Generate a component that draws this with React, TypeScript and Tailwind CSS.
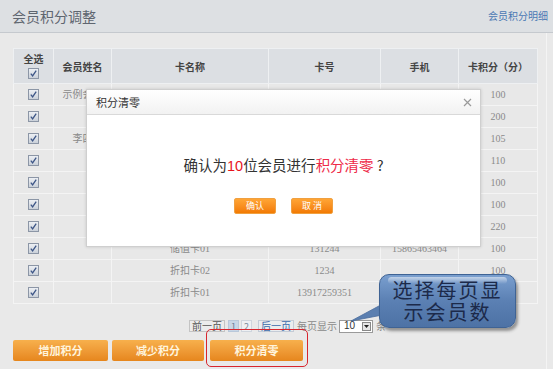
import React from "react";

const rows = [
  { name: "示例会员", card: "", no: "", phone: "", pts: "100" },
  { name: "", card: "", no: "", phone: "", pts: "200" },
  { name: "李四", card: "", no: "", phone: "", pts: "105" },
  { name: "", card: "", no: "", phone: "", pts: "110" },
  { name: "", card: "", no: "", phone: "", pts: "100" },
  { name: "", card: "", no: "", phone: "", pts: "100" },
  { name: "", card: "", no: "", phone: "", pts: "220" },
  { name: "", card: "储值卡01", no: "131244", phone: "15865463464", pts: "100" },
  { name: "", card: "折扣卡02", no: "1234", phone: "", pts: "100" },
  { name: "", card: "折扣卡01", no: "13917259351", phone: "", pts: "100" },
];

function Check() {
  return (
    <svg width="11" height="11" viewBox="0 0 11 11" className="inline-block">
      <defs>
        <linearGradient id="cb" x1="0" y1="0" x2="0" y2="1">
          <stop offset="0" stopColor="#eef1f5" />
          <stop offset="1" stopColor="#c9cfd8" />
        </linearGradient>
      </defs>
      <rect x="0.5" y="0.5" width="10" height="10" fill="url(#cb)" stroke="#8c96a6" />
      <path d="M2.8 5.6 L4.6 7.8 L8.2 2.6" fill="none" stroke="#3e5687" strokeWidth="1.3" />
    </svg>
  );
}

const cjk = { fontFamily: '"Noto Sans CJK SC", "Noto Sans", sans-serif' };
const cell = { fontFamily: '"Liberation Serif", "Noto Sans CJK SC", serif' };

export default function App() {
  return (
    <div className="relative w-[553px] h-[369px] overflow-hidden bg-[#e9e9e9]" style={cjk}>
      {/* header */}
      <div className="h-[33px] bg-[#dde0e3] border-b border-[#c5c9ce] flex items-center justify-between pl-[12px] pr-[5px]">
        <span className="text-[14px] text-[#5f6670] leading-none">会员积分调整</span>
        <span className="text-[10px] text-[#4b78b3] leading-none">会员积分明细</span>
      </div>
      <div className="absolute right-[6px] top-[33px] bottom-0 w-px bg-[#f4f4f4]" />

      <div className="pl-[13px] pt-[15px]">
        <table className="table-fixed border-collapse w-[524px]">
          <colgroup>
            <col className="w-[40px]" />
            <col className="w-[58px]" />
            <col className="w-[157px]" />
            <col className="w-[112px]" />
            <col className="w-[78px]" />
            <col className="w-[79px]" />
          </colgroup>
          <thead>
            <tr className="h-[35px] bg-[#dcdfe3] text-[10px] text-[#444] font-bold">
              <th className="border border-[#eef0f2] align-middle leading-[12px]">
                <div>全选</div>
                <div className="mt-[2px] leading-none"><Check /></div>
              </th>
              <th className="border border-[#eef0f2]">会员姓名</th>
              <th className="border border-[#eef0f2]">卡名称</th>
              <th className="border border-[#eef0f2]">卡号</th>
              <th className="border border-[#eef0f2]">手机</th>
              <th className="border border-[#eef0f2]">卡积分（分）</th>
            </tr>
          </thead>
          <tbody>
            {rows.map((r, i) => (
              <tr key={i} className="h-[22px] bg-[#e8e8e8] text-[10px] text-[#8a8a8a]" style={cell}>
                <td className="border border-[#f4f4f4] text-center leading-none p-0"><Check /></td>
                <td className="border border-[#f4f4f4] text-center p-0">{r.name}</td>
                <td className="border border-[#f4f4f4] text-center p-0">{r.card}</td>
                <td className="border border-[#f4f4f4] text-center p-0">{r.no}</td>
                <td className="border border-[#f4f4f4] text-center p-0">{r.phone}</td>
                <td className="border border-[#f4f4f4] text-center p-0">{r.pts}</td>
              </tr>
            ))}
          </tbody>
        </table>

        {/* pagination */}
        <div className="mt-[16px] h-[12px] flex items-center pl-[176px] text-[10px] leading-none">
          <span className="h-[12px] px-[2px] flex items-center border border-[#c4c4c4] bg-[#ececec] text-[#555]">前一页</span>
          <span className="ml-[3px] h-[12px] w-[11px] flex items-center justify-center border border-[#b9c8da] bg-[#c8d6e6] text-[#6a7d96] text-[9px]">1</span>
          <span className="ml-[2px] h-[12px] w-[11px] flex items-center justify-center border border-[#cfd5dd] bg-[#eef0f3] text-[#7a8899] text-[9px]">2</span>
          <span className="ml-[6px] h-[12px] px-[2px] flex items-center border border-[#c4cbd6] bg-[#eaecef] text-[#3b6aab]">后一页</span>
          <span className="ml-[3px] text-[#8a8a8a]">每页显示</span>
          <span className="ml-[2px] h-[13px] w-[34px] flex items-center justify-between border border-[#9a9a9a] bg-white pl-[4px] pr-[1px] text-[#333]" style={{ fontFamily: '"Liberation Sans", sans-serif' }}>
            <span className="text-[10px]">10</span>
            <span className="w-[9px] h-[9px] border border-[#888] bg-[#e6e6e6] flex items-center justify-center">
              <svg width="5" height="3" viewBox="0 0 5 3"><path d="M0 0 L5 0 L2.5 3 Z" fill="#222" /></svg>
            </span>
          </span>
          <span className="ml-[3px] text-[#8a8a8a]">条</span>
        </div>

        {/* buttons */}
        <div className="mt-[8px] flex items-center text-[11px] font-bold text-[#fff4dc]">
          <span className="w-[95px] h-[21px] flex items-center justify-center rounded-[2px] bg-gradient-to-b from-[#f7b04c] to-[#e6861c]">增加积分</span>
          <span className="ml-[4px] w-[92px] h-[21px] flex items-center justify-center rounded-[2px] bg-gradient-to-b from-[#f7b04c] to-[#e6861c]">减少积分</span>
          <span className="ml-[6px] w-[93px] h-[21px] flex items-center justify-center rounded-[2px] bg-gradient-to-b from-[#f7b04c] to-[#e6861c]">积分清零</span>
        </div>
      </div>

      {/* red highlight outline */}
      <div className="absolute left-[206px] top-[329px] w-[102px] h-[38px] rounded-[5px] border-[1.5px] border-[#d8262e]" />

      {/* modal */}
      <div className="absolute left-[86px] top-[89px] w-[395px] h-[158px] bg-white border border-[#cfcfcf] shadow-[0_0_3px_rgba(0,0,0,0.15)]">
        <div className="h-[25px] flex items-center justify-between pl-[9px] pr-[8px] bg-gradient-to-b from-white to-[#f2f2f2] border-b border-[#d9d9d9]">
          <span className="text-[11px] text-[#333] leading-none">积分清零</span>
          <svg width="9" height="9" viewBox="0 0 9 9"><path d="M1 1 L8 8 M8 1 L1 8" stroke="#9a9a9a" strokeWidth="1.2" /></svg>
        </div>
        <div className="pt-[43px] text-center text-[14.5px] text-[#333] leading-none">
          确认为<span className="text-[#e8131c]" style={{ fontFamily: '"Liberation Sans", sans-serif' }}>10</span>位会员进行<span className="text-[#ee2a48]">积分清零</span><span className="ml-[3px]">?</span>
        </div>
        <div className="mt-[24px] flex justify-center gap-[15px] text-[9px] text-white">
          <span className="w-[42px] h-[16px] flex items-center justify-center rounded-[2px] bg-gradient-to-b from-[#ffa534] to-[#f27a00] border border-[#f0a040]">确认</span>
          <span className="w-[42px] h-[16px] flex items-center justify-center rounded-[2px] bg-gradient-to-b from-[#ffa534] to-[#f27a00] border border-[#f0a040]">取 消</span>
        </div>
      </div>

      {/* callout tail */}
      <svg className="absolute left-0 top-0" width="553" height="369">
        <polygon points="351,321 390,300 393,313" fill="#5b7fb0" stroke="#4a6c9c" strokeWidth="0.8" />
      </svg>
      {/* callout bubble */}
      <div className="absolute left-[379px] top-[274px] w-[137px] h-[54px] rounded-[10px] bg-gradient-to-b from-[#7a9fcf] via-[#5b80b3] to-[#4d72a5] border border-[#3f6394] shadow-[2px_3px_3px_rgba(40,40,40,0.45)] flex flex-col items-center justify-center text-[#1c2a4a] text-[20px] leading-[22px] tracking-[2px]">
        <div className="absolute left-[8px] right-[8px] top-[2px] h-[7px] rounded-[6px] bg-gradient-to-b from-[rgba(255,255,255,0.55)] to-[rgba(255,255,255,0)]" />
        <span className="relative">选择每页显</span>
        <span className="relative">示会员数</span>
      </div>
    </div>
  );
}
